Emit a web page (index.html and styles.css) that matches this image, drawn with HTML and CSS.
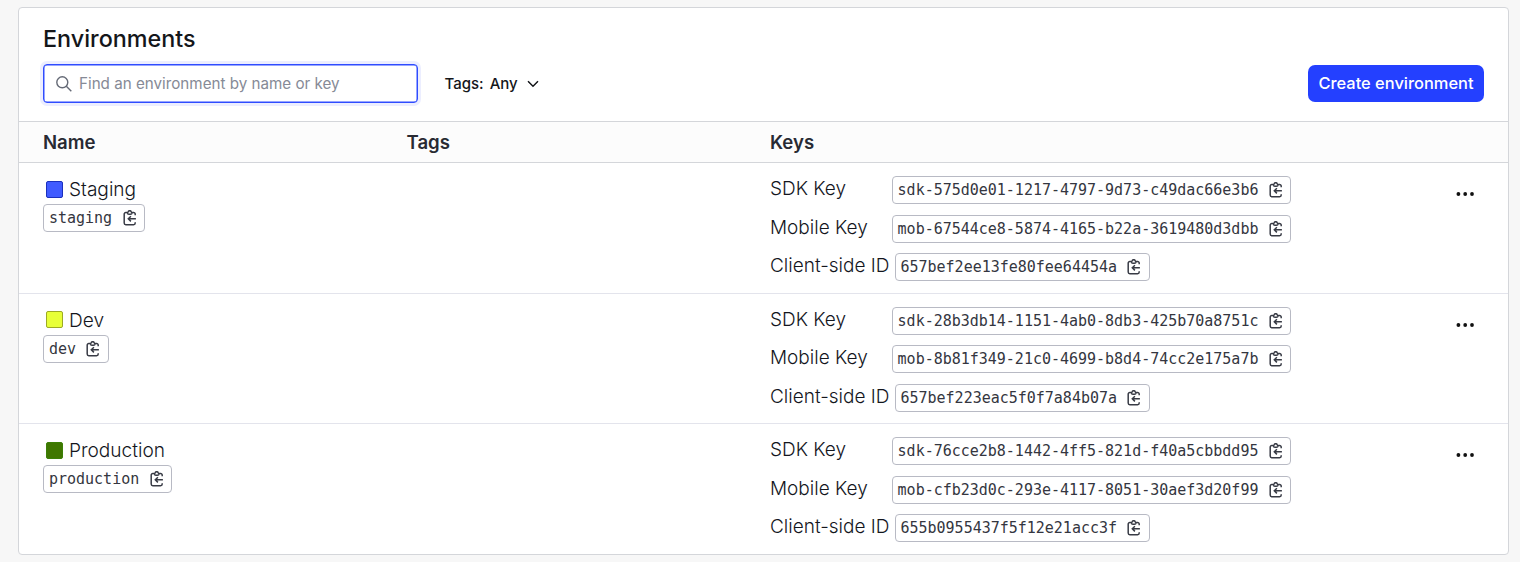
FILE: index.html
```
<!DOCTYPE html>
<html lang="en">
<head>
<meta charset="utf-8">
<title>Environments</title>
<link rel="stylesheet" href="styles.css">
</head>
<body>
<svg class="sprite" aria-hidden="true">
  <symbol id="copy" viewBox="0 0 14 16">
    <path d="M4 2.5H2.8A1.6 1.6 0 0 0 1.2 4.1v9A1.6 1.6 0 0 0 2.8 14.7h7.8a1.6 1.6 0 0 0 1.6-1.6v-.8M9.4 2.5h1.2a1.6 1.6 0 0 1 1.6 1.6v1.2M4.2 2.6c.5-.2.7-.4.9-.8a1.7 1.7 0 0 1 3.2 0c.2.4.4.6.9.8-.2 1.1-.9 1.7-1.8 1.7H6c-.9 0-1.6-.6-1.8-1.7zM12.9 8.8H5.4M7.9 6.2L5.3 8.8l2.6 2.6"/>
  </symbol>
  <symbol id="more" viewBox="0 0 18 4">
    <circle cx="2.4" cy="2" r="1.9"/><circle cx="9.2" cy="2" r="1.9"/><circle cx="16" cy="2" r="1.9"/>
  </symbol>
</svg>
<main class="card">
  <header class="toolbar">
    <h1 class="title">Environments</h1>
    <div class="controls">
      <div class="search">
        <svg class="search-icon" viewBox="0 0 16 16"><circle cx="6.3" cy="6.3" r="5.5"/><path d="M10.3 10.3l5 5"/></svg>
        <span class="placeholder">Find an environment by name or key</span>
      </div>
      <button class="filter"><span>Tags:</span><span>Any</span><svg class="chevron" viewBox="0 0 12 8"><path d="M1 1.2l5 5 5-5"/></svg></button>
      <button class="create"><span>Create environment</span></button>
    </div>
  </header>
  <div class="columns head"><span>Name</span><span>Tags</span><span>Keys</span></div>
  <section class="columns row">
    <div class="name">
      <div class="env"><i class="swatch blue"></i><span>Staging</span></div>
      <button class="chip"><code>staging</code><svg class="copy"><use href="#copy"/></svg></button>
    </div>
    <div></div>
    <div class="keys">
      <div class="key"><span class="label">SDK Key</span><button class="chip"><code>sdk-575d0e01-1217-4797-9d73-c49dac66e3b6</code><svg class="copy"><use href="#copy"/></svg></button></div>
      <div class="key"><span class="label">Mobile Key</span><button class="chip"><code>mob-67544ce8-5874-4165-b22a-3619480d3dbb</code><svg class="copy"><use href="#copy"/></svg></button></div>
      <div class="key"><span class="label client">Client-side ID</span><button class="chip"><code>657bef2ee13fe80fee64454a</code><svg class="copy"><use href="#copy"/></svg></button></div>
    </div>
    <svg class="more"><use href="#more"/></svg>
  </section>
  <section class="columns row">
    <div class="name">
      <div class="env"><i class="swatch yellow"></i><span>Dev</span></div>
      <button class="chip"><code>dev</code><svg class="copy"><use href="#copy"/></svg></button>
    </div>
    <div></div>
    <div class="keys">
      <div class="key"><span class="label">SDK Key</span><button class="chip"><code>sdk-28b3db14-1151-4ab0-8db3-425b70a8751c</code><svg class="copy"><use href="#copy"/></svg></button></div>
      <div class="key"><span class="label">Mobile Key</span><button class="chip"><code>mob-8b81f349-21c0-4699-b8d4-74cc2e175a7b</code><svg class="copy"><use href="#copy"/></svg></button></div>
      <div class="key"><span class="label client">Client-side ID</span><button class="chip"><code>657bef223eac5f0f7a84b07a</code><svg class="copy"><use href="#copy"/></svg></button></div>
    </div>
    <svg class="more"><use href="#more"/></svg>
  </section>
  <section class="columns row">
    <div class="name">
      <div class="env"><i class="swatch green"></i><span>Production</span></div>
      <button class="chip"><code>production</code><svg class="copy"><use href="#copy"/></svg></button>
    </div>
    <div></div>
    <div class="keys">
      <div class="key"><span class="label">SDK Key</span><button class="chip"><code>sdk-76cce2b8-1442-4ff5-821d-f40a5cbbdd95</code><svg class="copy"><use href="#copy"/></svg></button></div>
      <div class="key"><span class="label">Mobile Key</span><button class="chip"><code>mob-cfb23d0c-293e-4117-8051-30aef3d20f99</code><svg class="copy"><use href="#copy"/></svg></button></div>
      <div class="key"><span class="label client">Client-side ID</span><button class="chip"><code>655b0955437f5f12e21acc3f</code><svg class="copy"><use href="#copy"/></svg></button></div>
    </div>
    <svg class="more"><use href="#more"/></svg>
  </section>
</main>
</body>
</html>
```
FILE: styles.css
```
* { box-sizing: border-box; }
body {
  margin: 0;
  padding: 7px 11px 7px 18px;
  height: 562px;
  overflow: hidden;
  background: #f7f7f7;
  font-family: Inter, "Liberation Sans", sans-serif;
  color: #282a33;
}
button { font: inherit; color: inherit; background: none; border: 0; padding: 0; margin: 0; }
svg { display: block; fill: none; flex: none; }
.sprite { width: 0; height: 0; position: absolute; }
.card {
  height: 548px;
  background: #fff;
  border: 1px solid #d4d6da;
  border-radius: 4px;
  overflow: hidden;
  white-space: nowrap;
}
.toolbar { height: 113px; padding: 15px 24px 0; }
.title {
  margin: 0;
  font-size: 23.35px;
  line-height: 32px;
  font-weight: 500;
  color: #14161a;
}
.controls { display: flex; align-items: center; margin-top: 9px; height: 39px; }
.search {
  display: flex;
  align-items: center;
  width: 375px;
  height: 39px;
  padding-left: 12px;
  border: 1px solid #2f4cff;
  border-radius: 4px;
  box-shadow: inset 0 0 0 0.5px #2f4cff, 0 0 0 3px #eceeff;
}
.search-icon { width: 16px; height: 16px; stroke: #656a76; stroke-width: 1.4; }
.placeholder { margin-left: 7px; font-size: 15.2px; line-height: 19px; color: #868a96; }
.filter { display: flex; align-items: center; gap: 6px; margin-left: 26.5px; font-size: 15px; line-height: 20px; font-weight: 500; color: #14161a; }
.chevron { width: 12px; height: 8px; margin-left: 3px; stroke: #14161a; stroke-width: 1.5; }
.create {
  margin-left: auto;
  width: 176px;
  height: 37px;
  padding-bottom: 2px;
  border-radius: 7px;
  background: #2440ff;
  color: #fff;
  font-size: 16.45px;
  line-height: 20px;
  font-weight: 500;
}
.columns { display: grid; grid-template-columns: 363.5px 363.5px 1fr 20px; padding: 0 32px 0 24px; }
.head {
  height: 42px;
  border-top: 1px solid #d4d6da;
  border-bottom: 1px solid #d4d6da;
  background: #fcfcfc;
  font-size: 18.6px;
  line-height: 40px;
  font-weight: 600;
}
.row { height: 130.6px; border-bottom: 1px solid #e3e4ec; align-items: start; }
.row:last-child { border-bottom: 0; }
.name { padding-top: 13px; }
.env { display: flex; align-items: center; height: 26px; padding-left: 3px; gap: 6px; font-size: 19.1px; font-weight: 300; color: #14161d; }
.swatch { width: 17px; height: 17px; border: 1px solid; border-radius: 2px; }
.blue { background: #405bff; border-color: #1b30bd; }
.yellow { background: #e8ff38; border-color: #9daa24; }
.green { background: #3f7700; border-color: #3c8007; }
.name .chip { margin-top: 2px; }
.chip {
  display: flex;
  align-items: center;
  height: 28px;
  padding: 0 7.5px 0 5px;
  border: 1px solid #b8bac4;
  border-radius: 4px;
}
.chip code { font: 15px/26px "DejaVu Sans Mono", monospace; color: #343640; letter-spacing: -0.01px; }
.copy { width: 14px; height: 16px; margin-left: 10.4px; stroke: #383b45; stroke-width: 1.5; }
.keys { display: grid; grid-auto-rows: 28px; row-gap: 10.5px; padding-top: 13px; }
.key { display: flex; }
.label { width: 121.6px; line-height: 26px; font-size: 19px; font-weight: 300; color: #14161d; }
.label.client { width: 124.5px; }
.more { width: 18px; height: 4px; margin-top: 29px; fill: #111; }
```
